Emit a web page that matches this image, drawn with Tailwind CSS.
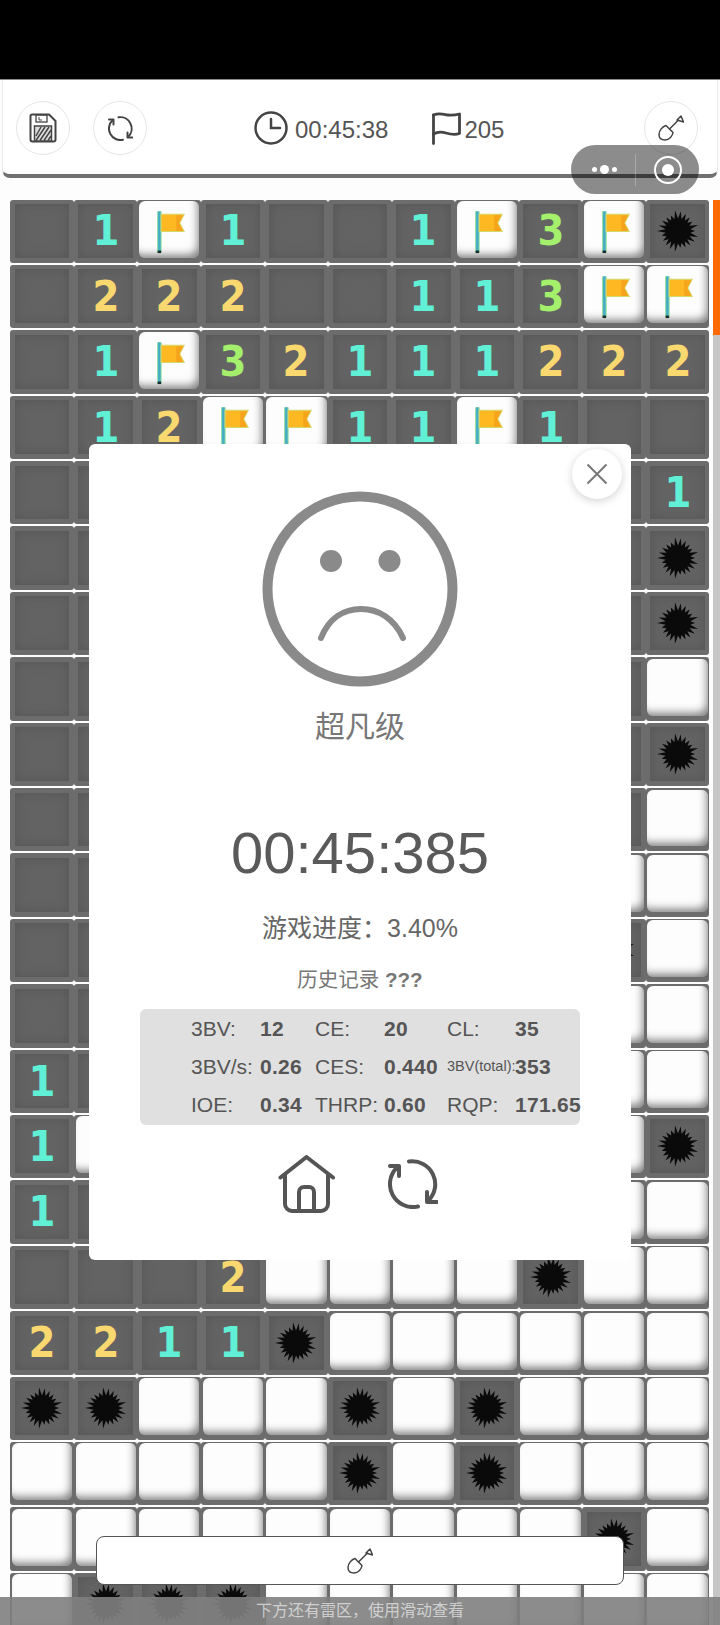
<!DOCTYPE html>
<html lang="zh">
<head>
  <meta charset="UTF-8">
  <meta name="viewport" content="width=device-width, initial-scale=1.0">
  <title>扫雷</title>
  <script src="https://cdn.jsdelivr.net/npm/@tailwindcss/browser@4"></script>
</head>
<body class="bg-[#fdfdfd] font-['Liberation_Sans','Noto_Sans_CJK_SC',sans-serif]">
  <svg class="hidden">
    <symbol id="refresh" viewBox="0 0 50 50">
      <g fill="none" stroke="currentColor" stroke-width="4" stroke-linecap="round" stroke-linejoin="round">
        <path d="M21 2.500A23 23 0 0 1 40 42"/>
        <path d="M49 43H39V33"/>
        <path d="M30 47.500A23 23 0 0 1 9 8.500"/>
        <path d="M2 7H11V17"/>
      </g>
    </symbol>
    <symbol id="shovel" viewBox="0 0 26 26">
      <g fill="none" stroke="currentColor" stroke-width="1.500" stroke-linejoin="round" stroke-linecap="round">
        <path d="M8 10.500L15 17.500C14.500 21 11.500 25 7 25C3 25 1 23 1 19.500C1 15.500 4.500 11.500 8 10.500Z"/>
        <path d="M11.500 14L20.500 5"/>
        <path d="M19 5L23 1L25.500 7Z"/>
      </g>
    </symbol>
    <symbol id="flag" viewBox="0 0 60 56">
      <rect x="18" y="10" width="4.500" height="41" fill="#8fd8a0"/>
      <rect x="19" y="10" width="2.500" height="40" fill="#45aec4"/>
      <rect x="18.500" y="49" width="3.500" height="2.500" fill="#1d2b2b"/>
      <path d="M22 13H45L40.500 21.500L45 30H22Z" fill="#fdb822" stroke="#d5d86a" stroke-width="1"/>
      <path d="M37 14H44L40 21.500L44 29.500H37Z" fill="#f7a41d"/>
    </symbol>
  </svg>

  <div class="relative h-[1625px] w-[720px] overflow-hidden">
    <div class="h-[80px] border-b border-[#8a8a8a] bg-black"></div>

    <!-- top bar -->
    <div class="mx-[2px] flex h-[98px] items-center rounded-b-[8px] border-x border-b-[4px] border-[#e8e8e8] border-b-[#707070] bg-white pl-[13px] pr-[19px] pt-[2px]">
      <button class="flex h-[54px] w-[54px] items-center justify-center rounded-full border border-[#e6e6e6] bg-white text-[#444]">
        <svg class="h-[30px] w-[28px]" viewBox="0 0 28 30" fill="none" stroke="currentColor">
          <path d="M3 1.500H20L26.500 8V26.500A2 2 0 0 1 24.500 28.500H3.500A2 2 0 0 1 1.500 26.500V3A1.500 1.500 0 0 1 3 1.500Z" stroke-width="2"/>
          <rect x="7" y="2" width="11" height="7" stroke-width="1.300"/>
          <path d="M10 4V7H13" stroke-width="1"/>
          <rect x="5.500" y="13" width="17" height="15" fill="#ddd" stroke-width="1.500"/>
          <path d="M7 23L12 14M7 27.500L16 14M11 27.500L20 14M15 27.500L22 17M19 27.500L22 23" stroke-width="1.500"/>
        </svg>
      </button>
      <button class="ml-[23px] flex h-[54px] w-[54px] items-center justify-center rounded-full border border-[#e6e6e6] bg-white text-[#444]">
        <svg class="h-[25px] w-[25px]"><use href="#refresh"/></svg>
      </button>

      <svg class="ml-[107px] h-[34px] w-[34px] text-[#444]" viewBox="0 0 34 34" fill="none" stroke="currentColor" stroke-width="2.500" stroke-linecap="round">
        <circle cx="17" cy="17" r="15.500"/>
        <path d="M17 8V17H26"/>
      </svg>
      <span class="ml-[7px] pt-[3px] text-[24px] leading-none text-[#555]">00:45:38</span>

      <svg class="ml-[43px] h-[33px] w-[30px] text-[#444]" viewBox="0 0 30 33" fill="none" stroke="currentColor" stroke-width="2.800" stroke-linecap="round" stroke-linejoin="round">
        <path d="M2.500 31.500V3"/>
        <path d="M2.500 3C9 0.500 12 2.500 17 3C21 3.500 25 3 28.500 2V21.500C24 23 20 22.500 15 21C10 19.500 6 20 2.500 22"/>
      </svg>
      <span class="ml-[3px] pt-[3px] text-[24px] leading-none text-[#555]">205</span>

      <button class="ml-auto flex h-[54px] w-[54px] items-center justify-center rounded-full border border-[#e6e6e6] bg-white text-[#444]">
        <svg class="h-[26px] w-[26px]"><use href="#shovel"/></svg>
      </button>
    </div>

    <!-- board -->
    <div id="board" class="ml-[10.4px] mt-[21.5px] grid w-[699px] grid-cols-11 gap-y-[2px]"></div>

    <!-- scroll bar -->
    <div class="absolute bottom-0 right-0 top-[200px] w-[7px] bg-[#c6c6c6]">
      <div class="h-[135px] bg-[#ff6a00]"></div>
    </div>

    <!-- wechat capsule -->
    <div class="absolute left-[571px] top-[145px] flex h-[49px] w-[128px] items-center rounded-full bg-black/45">
      <div class="flex w-[64px] items-center justify-center gap-[3px] pl-[2px]">
        <span class="h-[5px] w-[5px] rounded-full bg-white"></span>
        <span class="h-[9px] w-[9px] rounded-full bg-white"></span>
        <span class="h-[5px] w-[5px] rounded-full bg-white"></span>
      </div>
      <div class="h-[32px] w-px bg-white/25"></div>
      <div class="ml-[18px] flex h-[28px] w-[28px] items-center justify-center rounded-full border-[2.500px] border-white">
        <span class="h-[12px] w-[12px] rounded-full bg-white"></span>
      </div>
    </div>

    <!-- result dialog -->
    <div class="absolute left-[89px] top-[444px] flex h-[816px] w-[542px] flex-col items-center rounded-[6px] bg-white pt-[47px]">
      <button class="absolute right-[9px] top-[5px] flex h-[50px] w-[50px] items-center justify-center rounded-full bg-white shadow-[0_2px_8px_rgba(0,0,0,0.18)]">
        <svg class="h-[22px] w-[22px] text-[#777]" viewBox="0 0 22 22" fill="none" stroke="currentColor" stroke-width="2">
          <path d="M1.500 1.500L20.500 20.500M20.500 1.500L1.500 20.500"/>
        </svg>
      </button>

      <svg class="h-[196px] w-[196px] text-[#8a8a8a]" viewBox="0 0 196 196" fill="none" stroke="currentColor">
        <circle cx="98" cy="98" r="92.500" stroke-width="10"/>
        <circle cx="69" cy="70" r="11" fill="currentColor" stroke="none"/>
        <circle cx="127.500" cy="70" r="11" fill="currentColor" stroke="none"/>
        <path d="M59 147C67 127 82 118 99 118C116 118 132 127 141 147" stroke-width="6" stroke-linecap="round"/>
      </svg>

      <div class="mt-[20px] text-[30px] leading-[40px] text-[#777]">超凡级</div>
      <div class="mt-[74px] text-[58px] leading-[64px] text-[#5a5a5a]">00:45:385</div>
      <div class="mt-[25px] text-[25px] leading-[36px] text-[#666]">游戏进度：3.40%</div>
      <div class="mt-[20px] text-[20.500px] leading-[28px] text-[#777]">历史记录 <b>???</b></div>

      <div class="mt-[15px] grid h-[116px] w-[440px] grid-cols-[69px_55px_69px_63px_68px_auto] grid-rows-[38px_38px_38px] items-center rounded-[6px] bg-[#e0e0e0] pl-[51px] text-[21px] leading-none text-[#555] [&_b]:tracking-[0.3px]">
        <span>3BV:</span><b>12</b><span>CE:</span><b>20</b><span>CL:</span><b>35</b>
        <span>3BV/s:</span><b>0.26</b><span>CES:</span><b>0.440</b><span class="text-[14.500px]">3BV(total):</span><b>353</b>
        <span>IOE:</span><b>0.34</b><span>THRP:</span><b>0.60</b><span>RQP:</span><b>171.65</b>
      </div>

      <div class="mt-[30px] flex items-center gap-[52px] pr-[4px] text-[#555]">
        <svg class="h-[58px] w-[58px]" viewBox="0 0 58 58" fill="none" stroke="currentColor" stroke-width="4" stroke-linecap="round" stroke-linejoin="round">
          <path d="M2.500 22.500L28.500 2L55 22.500"/>
          <path d="M7 20V49A7 7 0 0 0 14 56H43A7 7 0 0 0 50 49V20"/>
          <path d="M21 56V37A5 5 0 0 1 26 32H31A5 5 0 0 1 36 37V56"/>
        </svg>
        <svg class="h-[50px] w-[50px]"><use href="#refresh"/></svg>
      </div>
    </div>

    <!-- dig button -->
    <button class="absolute left-[96px] top-[1536px] flex h-[49px] w-[528px] items-center justify-center rounded-[8px] border-[1.500px] border-[#555] bg-white text-[#444]">
      <svg class="h-[26px] w-[26px]"><use href="#shovel"/></svg>
    </button>

    <div class="absolute bottom-0 left-0 right-0 flex h-[28px] items-center justify-center bg-[#808080]/90 text-[16px] text-white/60">下方还有雷区，使用滑动查看</div>
  </div>

  <script>
    const rows = [
      '.1F1..1F3FM',
      '.222..113FF',
      '.1F32111222',
      '.12FF11F1..',
      '..........1',
      '..........M',
      '..........M',
      '..........W',
      '..........M',
      '..........W',
      '.........WW',
      '.........MW',
      '.........WW',
      '1........WW',
      '1W.......WM',
      '1........WW',
      '...2WWWWMWW',
      '2211MWWWWWW',
      'MMWWWMWMWWW',
      'WWWWWMWMWWW',
      'WWWWWWWWWMW',
      'WMMMWWWWWWW',
    ];

    const digitColors = { 1: 'text-[#60f0d5]', 2: 'text-[#f8d86f]', 3: 'text-[#a4ef6b]' };

    // spiky mine outline, radius varies a bit per tip
    let minePoints = '';
    for (let i = 0; i < 44; i++) {
      const a = i / 44 * Math.PI * 2;
      const r = i % 2 ? 12.5 : 17 + (i * 7 % 5);
      minePoints += (Math.cos(a) * r).toFixed(1) + ',' + (Math.sin(a) * r).toFixed(1) + ' ';
    }

    const darkCell = inner => `<div class="h-[63.4px] rounded-[3px] bg-[#6c6c6c] px-[4.5px] pb-[5px] pt-[4.5px]"><div class="flex h-full items-center justify-center bg-[#636363] shadow-[inset_0_0_12px_#565656]">${inner}</div></div>`;
    const whiteCell = inner => `<div class="h-[63.4px] rounded-[3px] bg-[#6c6c6c] px-[1.6px] pb-[5px] pt-[1.5px]"><div class="h-full rounded-[6px] bg-[#fdfdfd] shadow-[inset_-4px_-6px_8px_-3px_rgba(0,0,0,0.5)]">${inner}</div></div>`;

    let html = '';
    rows.forEach(row => {
      for (const c of row) {
        if (c === '.') html += darkCell('');
        else if (c === 'W') html += whiteCell('');
        else if (c === 'F') html += whiteCell('<svg class="h-full w-full"><use href="#flag"/></svg>');
        else if (c === 'M') html += darkCell(`<svg class="h-[44px] w-[44px]" viewBox="-22 -22 44 44"><polygon points="${minePoints}" fill="#0a0a0a"/></svg>`);
        else html += darkCell(`<span class="scale-x-90 font-['DejaVu_Sans',sans-serif] text-[43px] font-bold leading-none ${digitColors[c]}">${c}</span>`);
      }
    });
    document.getElementById('board').innerHTML = html;
  </script>
</body>
</html>
